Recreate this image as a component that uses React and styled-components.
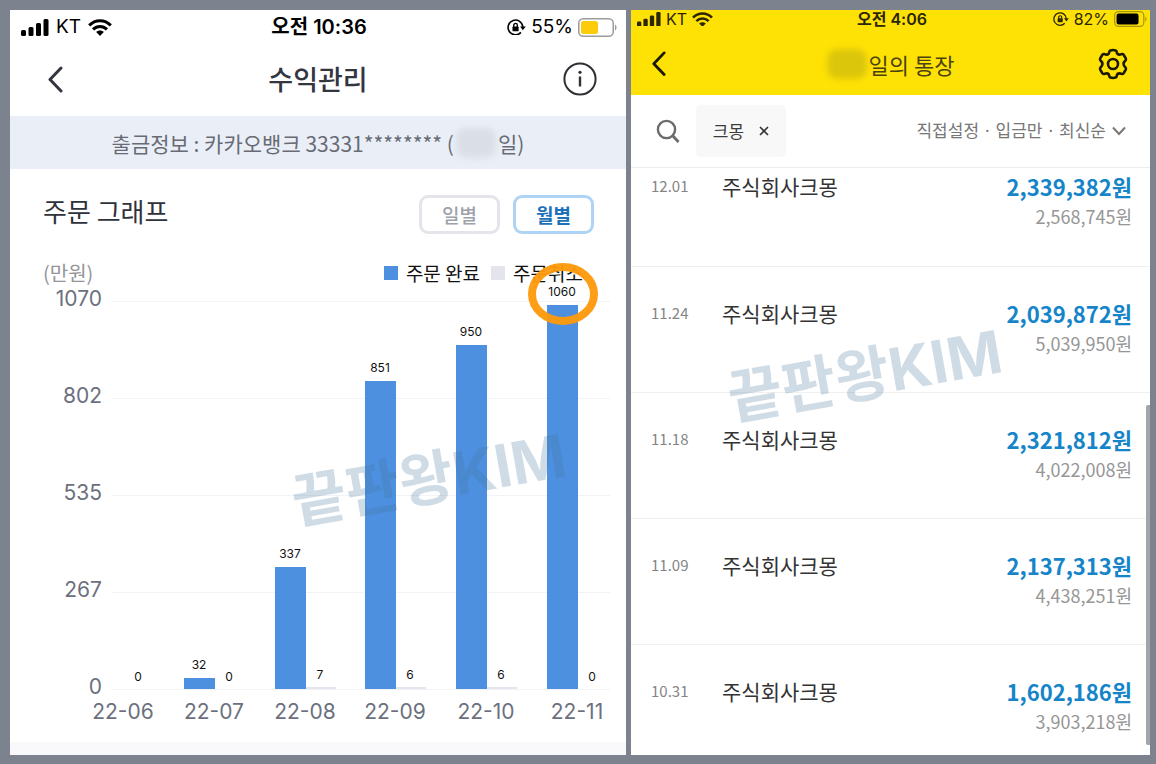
import React from "react";
import styled, { createGlobalStyle } from "styled-components";

const GlobalStyle = createGlobalStyle`
  * { box-sizing: border-box; }
  body {
    margin: 0;
    background: #7c838e;
    font-family: "Noto Sans CJK KR", "Noto Sans", sans-serif;
    color: #2f323b;
  }
  button { font: inherit; color: inherit; background: none; border: 0; padding: 0; cursor: pointer; }
  h1, h2, p, ul { margin: 0; padding: 0; font-weight: 400; }
  ul { list-style: none; }
  svg { display: block; flex: none; }
`;

const Board = styled.main`
  display: grid;
  grid-template-columns: 616fr 519fr;
  gap: 5px;
  min-height: 100vh;
  padding: 10px 6px 9px 10px;
`;

const Panel = styled.section`
  position: relative;
  display: flex;
  flex-direction: column;
  min-width: 0;
  background: #fff;
  overflow: hidden;
`;

const StatusBar = styled.div`
  display: grid;
  grid-template-columns: 1fr auto 1fr;
  align-items: center;
  height: ${(p) => (p.$compact ? 18 : 34)}px;
  padding: ${(p) => (p.$compact ? "0 3px 0 6px" : "0 9px 0 11px")};
  font-family: Inter, "Noto Sans CJK KR", sans-serif;
  font-size: ${(p) => (p.$compact ? 16 : 19)}px;
  line-height: 18px;
  color: ${(p) => (p.$compact ? "#2b2605" : "#000")};
`;

const StatusGroup = styled.div`
  display: flex;
  align-items: center;
  gap: ${(p) => p.$gap}px;
  justify-content: ${(p) => (p.$end ? "flex-end" : "flex-start")};
`;

const Clock = styled.span`
  font-size: ${(p) => (p.$compact ? 16 : 20)}px;
  font-weight: 600;
`;

const Header = styled.header`
  display: grid;
  grid-template-columns: 1fr auto 1fr;
  align-items: center;
  height: ${(p) => (p.$compact ? 67 : 72)}px;
  padding: ${(p) => (p.$compact ? "5px 22px 0 20px" : "0 29px 2px")};
`;

const IconButton = styled.button`
  display: flex;
  justify-self: ${(p) => (p.$end ? "end" : "start")};
  padding-left: ${(p) => p.$inset || 0}px;
`;

const Title = styled.h1`
  display: flex;
  align-items: center;
  font-size: ${(p) => (p.$compact ? 22 : 27)}px;
  font-weight: ${(p) => (p.$compact ? 400 : 500)};
  line-height: 32px;
  color: ${(p) => (p.$compact ? "#4a4210" : "#33353f")};
`;

const YellowTop = styled.div`
  background: #ffe205;
`;

const Smudge = styled.span`
  display: inline-block;
  width: 40px;
  height: 30px;
  margin: 0 2px;
  border-radius: 10px;
  background: ${(p) => p.$color};
  filter: blur(3px);
`;

const AccountBar = styled.p`
  display: flex;
  align-items: center;
  justify-content: center;
  height: 53px;
  background: #eaeff7;
  font-size: 21px;
  line-height: 30px;
  color: #686b75;
  white-space: pre;
`;

const SectionHead = styled.div`
  display: flex;
  justify-content: space-between;
  align-items: flex-start;
  padding: 26px 32px 0 33px;
`;

const SectionTitle = styled.h2`
  font-size: 26px;
  line-height: 32px;
`;

const ToggleGroup = styled.div`
  display: flex;
  gap: 13px;
`;

const Toggle = styled.button`
  width: 81px;
  height: 39px;
  border: 3px solid ${(p) => (p.$active ? "#afd3f4" : "#e4e5ea")};
  border-radius: 9px;
  font-size: 19px;
  line-height: 30px;
  font-weight: ${(p) => (p.$active ? 700 : 500)};
  color: ${(p) => (p.$active ? "#1e70b8" : "#a0a2aa")};
`;

const LegendRow = styled.div`
  display: flex;
  align-items: center;
  gap: 11px;
  height: 30px;
  margin-top: 24px;
  padding: 0 43px 0 33px;
  font-size: 19px;
  line-height: 30px;
  color: #111;
`;

const Unit = styled.span`
  margin-right: auto;
  font-size: 20px;
  color: #94959b;
`;

const LegendItem = styled.span`
  display: flex;
  align-items: center;
  gap: 8px;
  &::before {
    content: "";
    width: 14px;
    height: 14px;
    background: ${(p) => p.$color};
  }
`;

const Chart = styled.svg`
  position: relative;
  width: 100%;
  overflow: visible;
  font-family: Inter, sans-serif;
`;

const AxisText = styled.text`
  font-size: 21px;
  font-weight: 400;
  fill: #6c707e;
`;

const ValueText = styled.text`
  font-size: 12px;
  fill: #111;
  text-anchor: middle;
`;

const FooterBand = styled.div`
  flex: 1;
  min-height: 13px;
  background: #f9f9fb;
`;

const Watermark = styled.span`
  position: absolute;
  left: ${(p) => p.$left}%;
  top: ${(p) => p.$top}%;
  transform: translate(-50%, -50%) rotate(-10deg);
  font-family: Inter, "Noto Sans CJK KR", sans-serif;
  font-size: 59px;
  font-weight: 700;
  line-height: 76px;
  white-space: nowrap;
  color: rgba(69, 115, 152, 0.25);
  pointer-events: none;
`;

const FilterBar = styled.div`
  display: flex;
  align-items: center;
  height: 73px;
  padding: 0 24px 0 25px;
  border-bottom: 1px solid #ececec;
`;

const Chip = styled.button`
  display: flex;
  align-items: center;
  justify-content: center;
  gap: 15px;
  width: 90px;
  height: 52px;
  margin-left: 16px;
  border-radius: 5px;
  background: #f8f8f8;
  font-size: 17px;
  line-height: 24px;
  color: #3c3c3c;
`;

const SortButton = styled.button`
  display: flex;
  align-items: center;
  gap: 6px;
  margin-left: auto;
  font-family: "Noto Sans", "Noto Sans CJK KR", sans-serif;
  font-size: 17px;
  line-height: 24px;
  color: #777;
  white-space: nowrap;
`;

const Row = styled.li`
  display: grid;
  grid-template-columns: 71px 1fr auto;
  align-items: start;
  height: 126px;
  padding: 31px 18px 0 20px;
  border-bottom: 1px solid #f0f0f0;
  line-height: 30px;
  &:first-child { height: 99px; padding-top: 3px; }
  &:last-child { border-bottom: 0; height: 110px; }
`;

const RowDate = styled.time`
  font-size: 15px;
  color: #858585;
`;

const RowName = styled.span`
  font-size: 21px;
  color: #333;
`;

const Amounts = styled.div`
  display: flex;
  flex-direction: column;
  align-items: flex-end;
`;

const Deposit = styled.strong`
  font-size: 22px;
  font-weight: 700;
  color: #1584c9;
`;

const Balance = styled.span`
  font-size: 18px;
  color: #969696;
`;

const ScrollThumb = styled.div`
  position: absolute;
  right: 0;
  top: 53%;
  bottom: 10px;
  width: 4px;
  border-radius: 2px 0 0 2px;
  background: #a3a5a8;
`;

const Signal = ({ w }) => (
  <svg width={w} viewBox="0 0 28 17" fill="currentColor" aria-hidden="true">
    <rect x="0" y="11" width="5" height="6" rx="1.5" />
    <rect x="7.5" y="8" width="5" height="9" rx="1.5" />
    <rect x="15" y="4" width="5" height="13" rx="1.5" />
    <rect x="22.5" y="0" width="5" height="17" rx="1.5" />
  </svg>
);

const Wifi = ({ w }) => (
  <svg width={w} viewBox="0 0 24 17" fill="none" stroke="currentColor" strokeWidth="3" aria-hidden="true">
    <path d="M1.2 6.4C7.2 .1 16.8 .1 22.8 6.4" />
    <path d="M5 10.4c4-4 10-4 14 0" />
    <path d="M12 17l-3.8-3.9c2.1-2 5.5-2 7.6 0z" fill="currentColor" stroke="none" />
  </svg>
);

const RotationLock = ({ w }) => (
  <svg width={w} viewBox="0 0 18 16" fill="none" stroke="currentColor" aria-hidden="true">
    <path d="M13.2 12.7A7 7 0 1 1 15 7.5" strokeWidth="1.5" />
    <path d="M12.4 7h5.4L15 10.6z" fill="currentColor" stroke="none" />
    <path d="M6.4 7.6V5.9a1.7 1.7 0 0 1 3.4 0v1.7" strokeWidth="1.3" />
    <rect x="5.2" y="7" width="5.8" height="4.6" rx=".8" fill="currentColor" stroke="none" />
  </svg>
);

const Battery = ({ w, level, fill, line }) => (
  <svg width={w} viewBox="0 0 39 19" aria-hidden="true">
    <rect x=".75" y=".75" width="34.5" height="17.5" rx="4.5" fill="none" stroke={line} strokeWidth="1.5" />
    <rect x="3" y="3" width={level} height="13" rx="2.5" fill={fill} />
    <path d="M37 6.5c2 1 2 5 0 6z" fill={line} />
  </svg>
);

const Back = ({ color, w }) => (
  <svg width={w} viewBox="0 0 16 27" fill="none" stroke={color} strokeWidth="3" strokeLinecap="round" strokeLinejoin="round" aria-hidden="true">
    <path d="M14 2L3 13.5L14 25" />
  </svg>
);

const InfoIcon = () => (
  <svg width="34" height="34" viewBox="0 0 34 34" fill="none" stroke="#2f3035" aria-hidden="true">
    <circle cx="17" cy="17" r="15.6" strokeWidth="2" />
    <path d="M17 14.5v10" strokeWidth="2.4" />
    <circle cx="17" cy="10.3" r="1.6" fill="#2f3035" stroke="none" />
  </svg>
);

const GearIcon = () => (
  <svg width="30" height="32" viewBox="0 0 30 32" fill="none" stroke="#1c1902" strokeWidth="2.6" strokeLinejoin="round" aria-hidden="true">
    <path d="M12.4 2.4Q15 1.6 17.6 2.4Q18.6 2.8 18.8 4.2Q19.2 6.6 21.4 6.6Q22.4 6.6 23.6 6.1Q24.8 5.7 25.6 6.8L27.8 10.4Q28.4 11.6 27.4 12.6Q25.6 14 25.6 16Q25.6 18 27.4 19.4Q28.4 20.4 27.8 21.6L25.6 25.2Q24.8 26.3 23.6 25.9Q22.4 25.4 21.4 25.4Q19.2 25.4 18.8 27.8Q18.6 29.2 17.6 29.6Q15 30.4 12.4 29.6Q11.4 29.2 11.2 27.8Q10.8 25.4 8.6 25.4Q7.6 25.4 6.4 25.9Q5.2 26.3 4.4 25.2L2.2 21.6Q1.6 20.4 2.6 19.4Q4.4 18 4.4 16Q4.4 14 2.6 12.6Q1.6 11.6 2.2 10.4L4.4 6.8Q5.2 5.7 6.4 6.1Q7.6 6.6 8.6 6.6Q10.8 6.6 11.2 4.2Q11.4 2.8 12.4 2.4Z" />
    <circle cx="15" cy="16" r="5" />
  </svg>
);

const SearchIcon = () => (
  <svg width="24" height="24" viewBox="0 0 24 24" fill="none" stroke="#6b6b6b" strokeWidth="2.4" aria-hidden="true">
    <circle cx="10.5" cy="10.5" r="8.6" />
    <path d="M16.5 16.5L22.5 23" strokeWidth="2.8" />
  </svg>
);

const CloseIcon = () => (
  <svg width="10" height="10" viewBox="0 0 10 10" fill="none" stroke="#333" strokeWidth="1.6" aria-hidden="true">
    <path d="M1 1l8 8M9 1L1 9" />
  </svg>
);

const ChevronDown = () => (
  <svg width="14" height="10" viewBox="0 0 14 10" fill="none" stroke="#777" strokeWidth="2" aria-hidden="true">
    <path d="M1 1.5L7 8L13 1.5" />
  </svg>
);

const MONTHS = [
  { label: "22-06", done: 0, cancelled: 0 },
  { label: "22-07", done: 32, cancelled: 0 },
  { label: "22-08", done: 337, cancelled: 7 },
  { label: "22-09", done: 851, cancelled: 6 },
  { label: "22-10", done: 950, cancelled: 6 },
  { label: "22-11", done: 1060, cancelled: 0 },
];
const TICKS = [1070, 802, 535, 267, 0];
const BASE = 401;
const toHeight = (v) => Math.floor((v * 388) / 1070);

const OrderChart = () => (
  <Chart viewBox="0 0 616 454" role="img" aria-label="월별 주문 그래프">
    {TICKS.map((t, i) => (
      <g key={t}>
        <rect x="101" y={13 + i * 97} width="499" height="1" fill="#f1f3f6" />
        <AxisText x="92" y={18 + i * 97} textAnchor="end">{t}</AxisText>
      </g>
    ))}
    {MONTHS.map((m, i) => {
      const x = Math.round(83 + i * 90.8);
      const h = toHeight(m.done);
      const c = toHeight(m.cancelled);
      return (
        <g key={m.label}>
          {h > 0 && <rect x={x} y={BASE - h} width="31" height={h} fill="#4d90e0" />}
          {c > 0 && <rect x={x + 31} y={BASE - c} width="30" height={c} fill="#e4e6ed" />}
          {h > 0 && <ValueText x={x + 15} y={BASE - h - 9}>{m.done}</ValueText>}
          <ValueText x={x + 45} y={BASE - c - 8}>{m.cancelled}</ValueText>
          <AxisText x={x + 30} y="431" textAnchor="middle">{m.label}</AxisText>
        </g>
      );
    })}
    <ellipse cx="553" cy="6" rx="31" ry="27" fill="none" stroke="#fd9a0c" strokeOpacity=".96" strokeWidth="8" />
  </Chart>
);

const DEPOSITS = [
  { date: "12.01", amount: "2,339,382원", balance: "2,568,745원" },
  { date: "11.24", amount: "2,039,872원", balance: "5,039,950원" },
  { date: "11.18", amount: "2,321,812원", balance: "4,022,008원" },
  { date: "11.09", amount: "2,137,313원", balance: "4,438,251원" },
  { date: "10.31", amount: "1,602,186원", balance: "3,903,218원" },
];

export default function App() {
  return (
    <>
      <GlobalStyle />
      <Board>
        <Panel>
          <StatusBar>
            <StatusGroup $gap={7}>
              <Signal w={28} />
              <span>KT</span>
              <Wifi w={24} />
            </StatusGroup>
            <Clock>오전 10:36</Clock>
            <StatusGroup $gap={5} $end>
              <RotationLock w={19} />
              <span>55%</span>
              <Battery w={39} level={17} fill="#fccb0a" line="#9b9b9b" />
            </StatusGroup>
          </StatusBar>
          <Header>
            <IconButton $inset={8} aria-label="뒤로"><Back color="#33353f" w={16} /></IconButton>
            <Title>수익관리</Title>
            <IconButton $end aria-label="안내"><InfoIcon /></IconButton>
          </Header>
          <AccountBar>
            출금정보 : 카카오뱅크 33331******** (<Smudge $color="#dadfe7" />일)
          </AccountBar>
          <SectionHead>
            <SectionTitle>주문 그래프</SectionTitle>
            <ToggleGroup>
              <Toggle aria-pressed="false">일별</Toggle>
              <Toggle $active aria-pressed="true">월별</Toggle>
            </ToggleGroup>
          </SectionHead>
          <LegendRow>
            <Unit>(만원)</Unit>
            <LegendItem $color="#4d90e0">주문 완료</LegendItem>
            <LegendItem $color="#e4e5ec">주문취소</LegendItem>
          </LegendRow>
          <OrderChart />
          <FooterBand />
          <Watermark $left={68} $top={63}>끝판왕KIM</Watermark>
        </Panel>

        <Panel>
          <YellowTop>
            <StatusBar $compact>
              <StatusGroup $gap={5}>
                <Signal w={24} />
                <span>KT</span>
                <Wifi w={21} />
              </StatusGroup>
              <Clock $compact>오전 4:06</Clock>
              <StatusGroup $gap={5} $end>
                <RotationLock w={16} />
                <span>82%</span>
                <Battery w={33} level={26} fill="#000" line="#a8980f" />
              </StatusGroup>
            </StatusBar>
            <Header $compact>
              <IconButton aria-label="뒤로"><Back color="#1c1902" w={15} /></IconButton>
              <Title $compact><Smudge $color="#dcc60c" />일의 통장</Title>
              <IconButton $end aria-label="설정"><GearIcon /></IconButton>
            </Header>
          </YellowTop>
          <FilterBar>
            <IconButton aria-label="검색"><SearchIcon /></IconButton>
            <Chip>크몽<CloseIcon /></Chip>
            <SortButton>
              <span>직접설정</span>
              <span>·</span>
              <span>입금만</span>
              <span>·</span>
              <span>최신순</span>
              <ChevronDown />
            </SortButton>
          </FilterBar>
          <ul>
            {DEPOSITS.map((d) => (
              <Row key={d.date}>
                <RowDate>{d.date}</RowDate>
                <RowName>주식회사크몽</RowName>
                <Amounts>
                  <Deposit>{d.amount}</Deposit>
                  <Balance>{d.balance}</Balance>
                </Amounts>
              </Row>
            ))}
          </ul>
          <ScrollThumb />
          <Watermark $left={45} $top={49}>끝판왕KIM</Watermark>
        </Panel>
      </Board>
    </>
  );
}
